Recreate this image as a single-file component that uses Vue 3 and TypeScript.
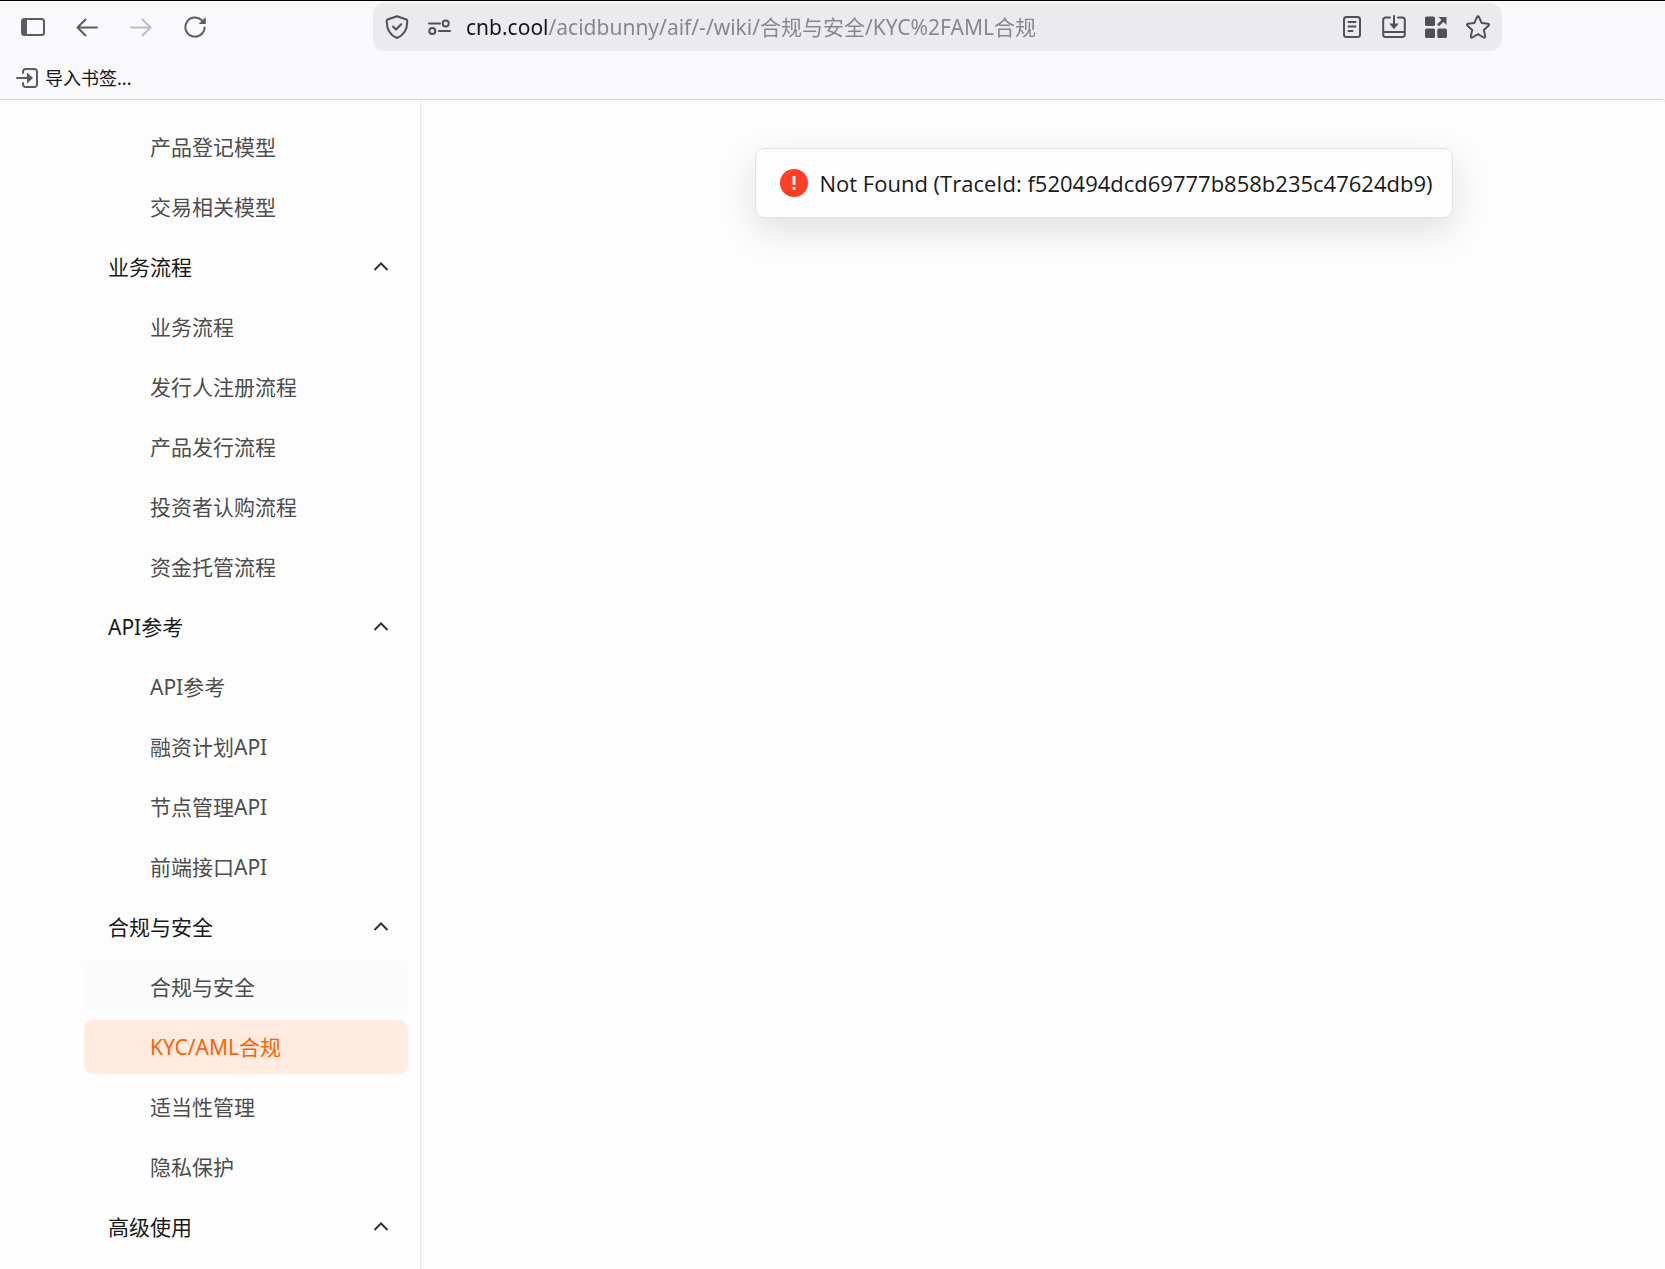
<script setup lang="ts">
import { ref } from 'vue'

interface Page {
  title: string
  hovered?: boolean
  active?: boolean
}

interface Section {
  title: string
  pages: Page[]
}

const address = ref('cnb.cool/acidbunny/aif/-/wiki/合规与安全/KYC%2FAML合规')

const leadingPages: Page[] = [{ title: '产品登记模型' }, { title: '交易相关模型' }]

const sections: Section[] = [
  {
    title: '业务流程',
    pages: [
      { title: '业务流程' },
      { title: '发行人注册流程' },
      { title: '产品发行流程' },
      { title: '投资者认购流程' },
      { title: '资金托管流程' },
    ],
  },
  {
    title: 'API参考',
    pages: [
      { title: 'API参考' },
      { title: '融资计划API' },
      { title: '节点管理API' },
      { title: '前端接口API' },
    ],
  },
  {
    title: '合规与安全',
    pages: [
      { title: '合规与安全', hovered: true },
      { title: 'KYC/AML合规', active: true },
      { title: '适当性管理' },
      { title: '隐私保护' },
    ],
  },
  { title: '高级使用', pages: [] },
]
</script>

<template>
  <div class="window">
    <header class="chrome">
      <div class="toolbar">
        <div class="nav-buttons">
          <button type="button" class="icon" aria-label="侧栏">
            <svg viewBox="0 0 24 24">
              <rect x="1" y="4" width="22" height="16" rx="2.5" fill="none" stroke="currentColor" stroke-width="2" />
              <path d="M2.5 4H6v16H2.5A1.5 1.5 0 0 1 1 18.500V5.500A1.500 1.500 0 0 1 2.500 4z" fill="currentColor" />
            </svg>
          </button>
          <button type="button" class="icon" aria-label="后退">
            <svg viewBox="0 0 24 24" class="line">
              <path d="M22 12.500H3M10.500 4.500l-8 8 8 8" />
            </svg>
          </button>
          <button type="button" class="icon dim" aria-label="前进" disabled>
            <svg viewBox="0 0 24 24" class="line">
              <path d="M2 12.500h19M13.500 4.500l8 8-8 8" />
            </svg>
          </button>
          <button type="button" class="icon" aria-label="刷新">
            <svg viewBox="0 0 24 24" class="line">
              <path d="M18.800 5.300A9.600 9.600 0 1 0 21.600 12.500" />
              <path d="M22.700 2v7h-7z" fill="currentColor" stroke="none" />
            </svg>
          </button>
        </div>

        <form class="address-bar" @submit.prevent>
          <button type="button" class="icon" aria-label="跟踪保护">
            <svg viewBox="0 0 24 24" class="line">
              <path d="M12 1.200L21.400 4.500Q22.400 5 22.300 6.500C22.200 15 18.500 20.500 12 23 5.500 20.500 1.800 15 1.700 6.500Q1.600 5 2.600 4.500z" />
              <path d="M8 11.500l3 3 5.200-5.200" />
            </svg>
          </button>
          <button type="button" class="icon" aria-label="网站权限">
            <svg viewBox="0 0 24 24" class="line">
              <path d="M2 8.500h11M12 16h11" />
              <circle cx="18.700" cy="8.500" r="3" />
              <circle cx="5.300" cy="16" r="3" />
            </svg>
          </button>
          <input v-model="address" class="address" type="text" aria-label="地址" spellcheck="false" />
          <div class="page-actions">
            <button type="button" class="icon" aria-label="阅读模式">
              <svg viewBox="0 0 24 24" class="line">
                <rect x="4" y="2" width="16" height="20" rx="2.500" />
                <path d="M8.500 7h7M8.500 11.500h7M8.500 16h4" />
              </svg>
            </button>
            <button type="button" class="icon" aria-label="保存页面">
              <svg viewBox="0 0 24 24" class="line">
                <path d="M8 2.500H3.500A2.300 2.300 0 0 0 1.200 4.800v15A2.300 2.300 0 0 0 3.500 22h17a2.300 2.300 0 0 0 2.300-2.200v-15a2.300 2.300 0 0 0-2.300-2.300H16M1.500 17h21M12 1v9" />
                <path d="M7.300 8.500h9.400L12 14.300z" fill="currentColor" stroke="none" />
              </svg>
            </button>
            <button type="button" class="icon" aria-label="扩展应用">
              <svg viewBox="0 0 24 24">
                <g fill="currentColor">
                  <rect x="1" y="1.500" width="10" height="9.500" rx="1.500" />
                  <rect x="1" y="13.500" width="10" height="9.500" rx="1.500" />
                  <rect x="13.300" y="13.500" width="9.700" height="9.500" rx="1.500" />
                  <path d="M14.500 2H22.500V10z" />
                </g>
                <path d="M14 10.300L20 4.500" stroke="currentColor" stroke-width="2.600" />
              </svg>
            </button>
            <button type="button" class="icon" aria-label="添加书签">
              <svg viewBox="0 0 24 24" class="line">
                <path d="M11.100 1.900a1 1 0 0 1 1.800 0l2.700 6 6.600.8a1 1 0 0 1 .5 1.700l-4.900 4.500 1.400 6.500a1 1 0 0 1-1.500 1.100L12 19.200l-5.700 3.300a1 1 0 0 1-1.500-1.100l1.400-6.500-4.900-4.500a1 1 0 0 1 .5-1.700l6.600-.8z" />
              </svg>
            </button>
          </div>
        </form>
      </div>

      <div class="bookmarks">
        <button type="button" class="bookmark">
          <svg viewBox="0 0 24 24" class="line">
            <path d="M7 7V5.500A2.500 2.500 0 0 1 9.500 3h9A2.500 2.500 0 0 1 21 5.500v13a2.500 2.500 0 0 1-2.500 2.500h-9A2.500 2.500 0 0 1 7 18.500V17M1 12h11" />
            <path d="M11 6.500l6 5.500-6 5.500z" fill="currentColor" stroke="none" />
          </svg>
          <span>导入书签...</span>
        </button>
      </div>
    </header>

    <div class="page">
      <nav class="sidebar" aria-label="Wiki">
        <ul class="list">
          <li v-for="page in leadingPages" :key="page.title">
            <a href="#" class="row link">{{ page.title }}</a>
          </li>
        </ul>
        <section v-for="section in sections" :key="section.title" class="list">
          <button type="button" class="row group" aria-expanded="true">
            <span>{{ section.title }}</span>
            <svg viewBox="0 0 18 18" class="chevron"><path d="M2.500 12L9 5.500l6.500 6.500" /></svg>
          </button>
          <ul v-if="section.pages.length" class="list">
            <li v-for="page in section.pages" :key="page.title">
              <a href="#" class="row link" :class="{ hovered: page.hovered, active: page.active }">{{ page.title }}</a>
            </li>
          </ul>
        </section>
      </nav>

      <main class="content">
        <div class="toast" role="alert">
          <svg viewBox="0 0 28 28" class="alert">
            <circle cx="14" cy="14" r="14" fill="#ff3e24" />
            <path d="M12.600 7h2.800v9h-2.800zM12.600 18h2.800v3h-2.800z" fill="#fff" />
          </svg>
          <span>Not Found (TraceId: f520494dcd69777b858b235c47624db9)</span>
        </div>
      </main>
    </div>
  </div>
</template>

<style>
body {
  margin: 0;
  background: #f9f9fb;
}
</style>

<style scoped>
.window {
  display: flex;
  flex-direction: column;
  min-height: 100vh;
  box-sizing: border-box;
  border-top: 1px solid #000;
  font-family: 'Noto Sans', 'Noto Sans CJK SC', sans-serif;
  font-size: 21px;
  color: #1a1a1a;
}

button,
input {
  margin: 0;
  padding: 0;
  border: 0;
  background: none;
  font: inherit;
  color: inherit;
}

svg {
  display: block;
  flex: none;
}

.line {
  fill: none;
  stroke: currentColor;
  stroke-width: 2;
  stroke-linecap: round;
  stroke-linejoin: round;
}

.toolbar {
  display: flex;
  padding: 2px 163px 0 21px;
}

.nav-buttons {
  display: flex;
  align-items: center;
  gap: 30px;
  width: 352px;
}

.icon {
  flex: none;
  width: 24px;
  height: 24px;
  color: #5b5b66;
}

.icon svg {
  width: 24px;
  height: 24px;
}

.dim {
  color: #bdbdc3;
}

.address-bar {
  display: flex;
  flex: 1;
  align-items: center;
  gap: 18px;
  height: 48px;
  padding: 0 12px;
  box-sizing: border-box;
  border-radius: 12px;
  background: #ebebed;
}

.address-bar .icon {
  color: #505058;
}

.address {
  flex: 1;
  min-width: 0;
  height: 36px;
  margin-left: -3px;
  padding-bottom: 2px;
  box-sizing: border-box;
  outline: none;
  color: #85858a;
  /* the host part is darker than the path */
  background: linear-gradient(to right, #15141a 83px, #85858a 83px);
  background-clip: text;
  -webkit-text-fill-color: transparent;
}

.page-actions {
  display: flex;
  gap: 18px;
}

.bookmarks {
  display: flex;
  align-items: center;
  height: 48px;
  padding: 6px 16px 0;
  box-sizing: border-box;
}

.bookmark {
  display: flex;
  align-items: center;
  gap: 5px;
  height: 30px;
  font-size: 18px;
  line-height: 24px;
  color: #15141a;
}

.bookmark svg {
  width: 24px;
  height: 24px;
  color: #5b5b66;
}

.page {
  display: flex;
  flex: 1;
  border-top: 1px solid #d5d5d9;
  border-top-right-radius: 4px;
  background: #fdfdfd;
}

.sidebar {
  display: flex;
  flex-direction: column;
  gap: 6px;
  width: 421px;
  padding: 20px 12px 12px 84px;
  box-sizing: border-box;
  border-right: 1px solid #ebebeb;
}

.list {
  display: flex;
  flex-direction: column;
  gap: 6px;
  margin: 0;
  padding: 0;
  list-style: none;
}

.row {
  display: flex;
  align-items: center;
  height: 54px;
  box-sizing: border-box;
  border-radius: 9px;
  line-height: 30px;
  text-decoration: none;
}

.group {
  justify-content: space-between;
  padding: 0 18px 0 24px;
  color: #1a1a1a;
}

.link {
  padding: 0 24px 0 66px;
  color: #4d4d4d;
}

.hovered {
  background: #fbfbfb;
}

.active {
  background: #ffebe0;
  color: #ff6200;
}

.chevron {
  width: 18px;
  height: 18px;
  fill: none;
  stroke: #333;
  stroke-width: 2;
}

.content {
  display: flex;
  flex: 1;
  align-items: flex-start;
  justify-content: center;
  padding: 48px 0 0 122px;
}

.toast {
  display: flex;
  align-items: center;
  gap: 12px;
  padding: 20px 20px 20px 24px;
  border: 1px solid #e3e3e3;
  border-radius: 9px;
  background: #fdfdfd;
  box-shadow: 0 12px 36px rgba(0, 0, 0, 0.12);
  font-family: 'Open Sans', 'Noto Sans', sans-serif;
  font-size: 22px;
  line-height: 28px;
  white-space: nowrap;
}

.alert {
  width: 28px;
  height: 28px;
}
</style>
